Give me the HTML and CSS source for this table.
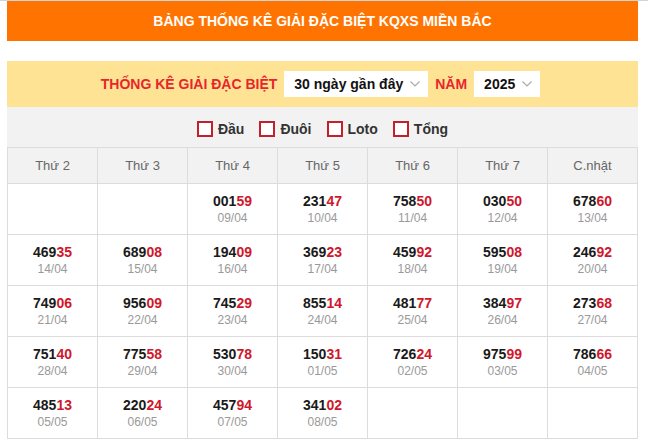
FILE: index.html
```html
<!DOCTYPE html>
<html lang="vi">
<head>
<meta charset="utf-8">
<title>Bảng thống kê giải đặc biệt</title>
<link rel="stylesheet" href="styles.css">
</head>
<body>
<div class="page">
  <div class="title">BẢNG THỐNG KÊ GIẢI ĐẶC BIỆT KQXS MIỀN BẮC</div>
  <div class="box">
    <div class="filter">
      <span class="flabel">THỐNG KÊ GIẢI ĐẶC BIỆT</span>
      <div class="sel">30 ngày gần đây<svg class="chev" viewBox="0 0 10 6" width="10" height="6"><path d="M0.5 0.5 L5 5 L9.5 0.5" fill="none" stroke="#aaa" stroke-width="1.2"/></svg></div>
      <span class="flabel">NĂM</span>
      <div class="sel">2025<svg class="chev" viewBox="0 0 10 6" width="10" height="6"><path d="M0.5 0.5 L5 5 L9.5 0.5" fill="none" stroke="#aaa" stroke-width="1.2"/></svg></div>
    </div>
    <div class="checks">
      <label class="chk"><span class="cb"></span>Đầu</label>
      <label class="chk"><span class="cb"></span>Đuôi</label>
      <label class="chk"><span class="cb"></span>Loto</label>
      <label class="chk"><span class="cb"></span>Tổng</label>
    </div>
    <div class="grid">
      <div class="hd">Thứ 2</div><div class="hd">Thứ 3</div><div class="hd">Thứ 4</div><div class="hd">Thứ 5</div><div class="hd">Thứ 6</div><div class="hd">Thứ 7</div><div class="hd">C.nhật</div>

      <div class="cell"></div>
      <div class="cell"></div>
      <div class="cell"><div class="num">001<b>59</b></div><div class="dt">09/04</div></div>
      <div class="cell"><div class="num">231<b>47</b></div><div class="dt">10/04</div></div>
      <div class="cell"><div class="num">758<b>50</b></div><div class="dt">11/04</div></div>
      <div class="cell"><div class="num">030<b>50</b></div><div class="dt">12/04</div></div>
      <div class="cell"><div class="num">678<b>60</b></div><div class="dt">13/04</div></div>

      <div class="cell"><div class="num">469<b>35</b></div><div class="dt">14/04</div></div>
      <div class="cell"><div class="num">689<b>08</b></div><div class="dt">15/04</div></div>
      <div class="cell"><div class="num">194<b>09</b></div><div class="dt">16/04</div></div>
      <div class="cell"><div class="num">369<b>23</b></div><div class="dt">17/04</div></div>
      <div class="cell"><div class="num">459<b>92</b></div><div class="dt">18/04</div></div>
      <div class="cell"><div class="num">595<b>08</b></div><div class="dt">19/04</div></div>
      <div class="cell"><div class="num">246<b>92</b></div><div class="dt">20/04</div></div>

      <div class="cell"><div class="num">749<b>06</b></div><div class="dt">21/04</div></div>
      <div class="cell"><div class="num">956<b>09</b></div><div class="dt">22/04</div></div>
      <div class="cell"><div class="num">745<b>29</b></div><div class="dt">23/04</div></div>
      <div class="cell"><div class="num">855<b>14</b></div><div class="dt">24/04</div></div>
      <div class="cell"><div class="num">481<b>77</b></div><div class="dt">25/04</div></div>
      <div class="cell"><div class="num">384<b>97</b></div><div class="dt">26/04</div></div>
      <div class="cell"><div class="num">273<b>68</b></div><div class="dt">27/04</div></div>

      <div class="cell"><div class="num">751<b>40</b></div><div class="dt">28/04</div></div>
      <div class="cell"><div class="num">775<b>58</b></div><div class="dt">29/04</div></div>
      <div class="cell"><div class="num">530<b>78</b></div><div class="dt">30/04</div></div>
      <div class="cell"><div class="num">150<b>31</b></div><div class="dt">01/05</div></div>
      <div class="cell"><div class="num">726<b>24</b></div><div class="dt">02/05</div></div>
      <div class="cell"><div class="num">975<b>99</b></div><div class="dt">03/05</div></div>
      <div class="cell"><div class="num">786<b>66</b></div><div class="dt">04/05</div></div>

      <div class="cell"><div class="num">485<b>13</b></div><div class="dt">05/05</div></div>
      <div class="cell"><div class="num">220<b>24</b></div><div class="dt">06/05</div></div>
      <div class="cell"><div class="num">457<b>94</b></div><div class="dt">07/05</div></div>
      <div class="cell"><div class="num">341<b>02</b></div><div class="dt">08/05</div></div>
      <div class="cell"></div>
      <div class="cell"></div>
      <div class="cell"></div>
    </div>
  </div>
</div>
</body>
</html>
```
FILE: styles.css
```css
html, body {
  margin: 0;
  padding: 0;
  background: #fff;
}
body {
  border-top: 1px solid #d4d4d4;
  font-family: "Liberation Sans", Arial, sans-serif;
}
.page {
  width: 631px;
  margin-left: 7px;
}
.title {
  height: 40px;
  background: #ff7400;
  color: #fff;
  font-weight: bold;
  font-size: 14px;
  display: flex;
  align-items: center;
  justify-content: center;
}
.box {
  margin-top: 20px;
}
.filter {
  height: 46px;
  background: #ffe394;
  display: flex;
  align-items: center;
  justify-content: center;
  gap: 7px;
  padding-right: 4px;
}
.flabel {
  color: #e8252b;
  font-weight: bold;
  font-size: 14px;
}
.sel {
  height: 26px;
  background: #fff;
  display: flex;
  align-items: center;
  padding: 0 8px 0 10px;
  gap: 7px;
  font-size: 14px;
  font-weight: bold;
  color: #111;
}
.chev {
  display: block;
}
.checks {
  height: 40px;
  background: #f2f2f2;
  display: flex;
  align-items: center;
  justify-content: center;
  gap: 15px;
  padding-top: 3px;
  box-sizing: border-box;
}
.chk {
  display: flex;
  align-items: center;
  gap: 5px;
  font-size: 14px;
  font-weight: bold;
  color: #333;
}
.cb {
  width: 12px;
  height: 12px;
  border: 2px solid #c1202d;
  background: #fff;
  display: block;
}
.grid {
  display: grid;
  grid-template-columns: repeat(7, 90px);
  border-top: 1px solid #dcdcdc;
  border-left: 1px solid #dcdcdc;
}
.hd {
  height: 35px;
  background: #f2f2f2;
  border-right: 1px solid #dcdcdc;
  border-bottom: 1px solid #dcdcdc;
  display: flex;
  align-items: center;
  justify-content: center;
  font-size: 13px;
  color: #666;
}
.cell {
  height: 50px;
  border-right: 1px solid #dcdcdc;
  border-bottom: 1px solid #dcdcdc;
  display: flex;
  flex-direction: column;
  align-items: center;
  justify-content: center;
  background: #fff;
}
.num {
  font-size: 14px;
  font-weight: bold;
  color: #1a1a1a;
  line-height: 17px;
}
.num b {
  color: #d0172c;
}
.dt {
  font-size: 12px;
  color: #999;
  line-height: 16px;
}
```
